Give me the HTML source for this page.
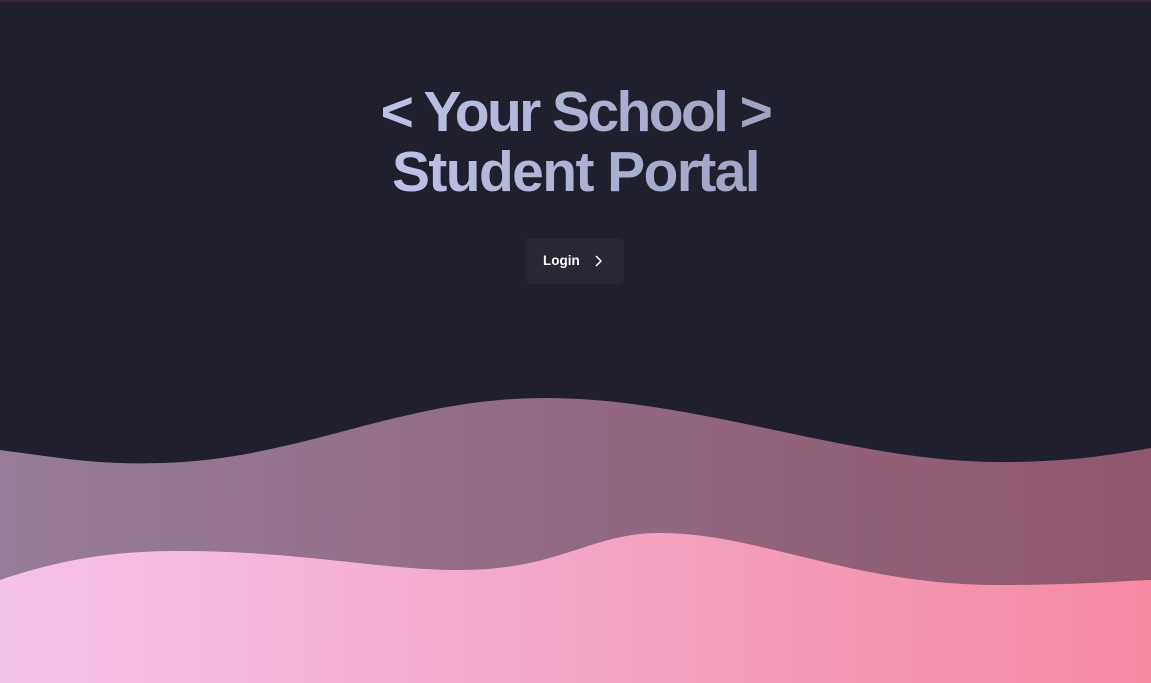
<!DOCTYPE html>
<html><head><style>
html,body{margin:0;padding:0;width:1151px;height:683px;overflow:hidden;background:#1f1f2e;}
.top{position:absolute;left:0;top:0;width:1151px;height:2px;background:#3a2a35;}
h1{position:absolute;left:0;width:1151px;top:82px;margin:0;text-align:center;font-family:"Liberation Sans",sans-serif;font-weight:700;font-size:57px;line-height:60px;letter-spacing:-2.6px;color:#b4b9da;
background:linear-gradient(90deg,#c0c6ea 30%,#9ba0bf 70%);-webkit-background-clip:text;background-clip:text;-webkit-text-fill-color:transparent;}
h1 .l2{letter-spacing:-1.6px;}
.btn{position:absolute;left:526px;top:238px;width:98px;height:46px;background:#272735;border-radius:5px;font-family:"Liberation Sans",sans-serif;font-weight:700;font-size:13.5px;color:#fff;}
.btn span{position:absolute;left:17px;top:15px;}
svg.w{position:absolute;left:0;top:0;}
</style></head><body>
<div class="top"></div>
<h1>&lt; Your School &gt;<br><span class="l2">Student Portal</span></h1>
<div class="btn"><span>Login</span></div>
<svg class="w" width="1151" height="683" viewBox="0 0 1151 683">
<defs>
<linearGradient id="a" x1="0" x2="1"><stop offset="0" stop-color="#967c98"/><stop offset="1" stop-color="#8f576d"/></linearGradient>
<linearGradient id="b" x1="0" x2="1"><stop offset="0" stop-color="#f5c2ea"/><stop offset="1" stop-color="#f489a2"/></linearGradient>
</defs>
<path d="M596 256 L601 261 L596 266" stroke="#fff" stroke-width="1.5" fill="none"/>
<path d="M0 450 C60 458 100 465 160 463 C300 460 400 398 545 398 C700 398 850 462 1000 462 C1070 462 1110 455 1151 448 L1151 683 L0 683 Z" fill="url(#a)"/>
<path d="M0 580 C60 560 110 551 180 551 C300 551 380 570 460 570 C560 570 590 533 660 533 C760 533 850 585 1000 585 C1080 585 1120 581 1151 580 L1151 683 L0 683 Z" fill="url(#b)"/>
</svg>
</body></html>
